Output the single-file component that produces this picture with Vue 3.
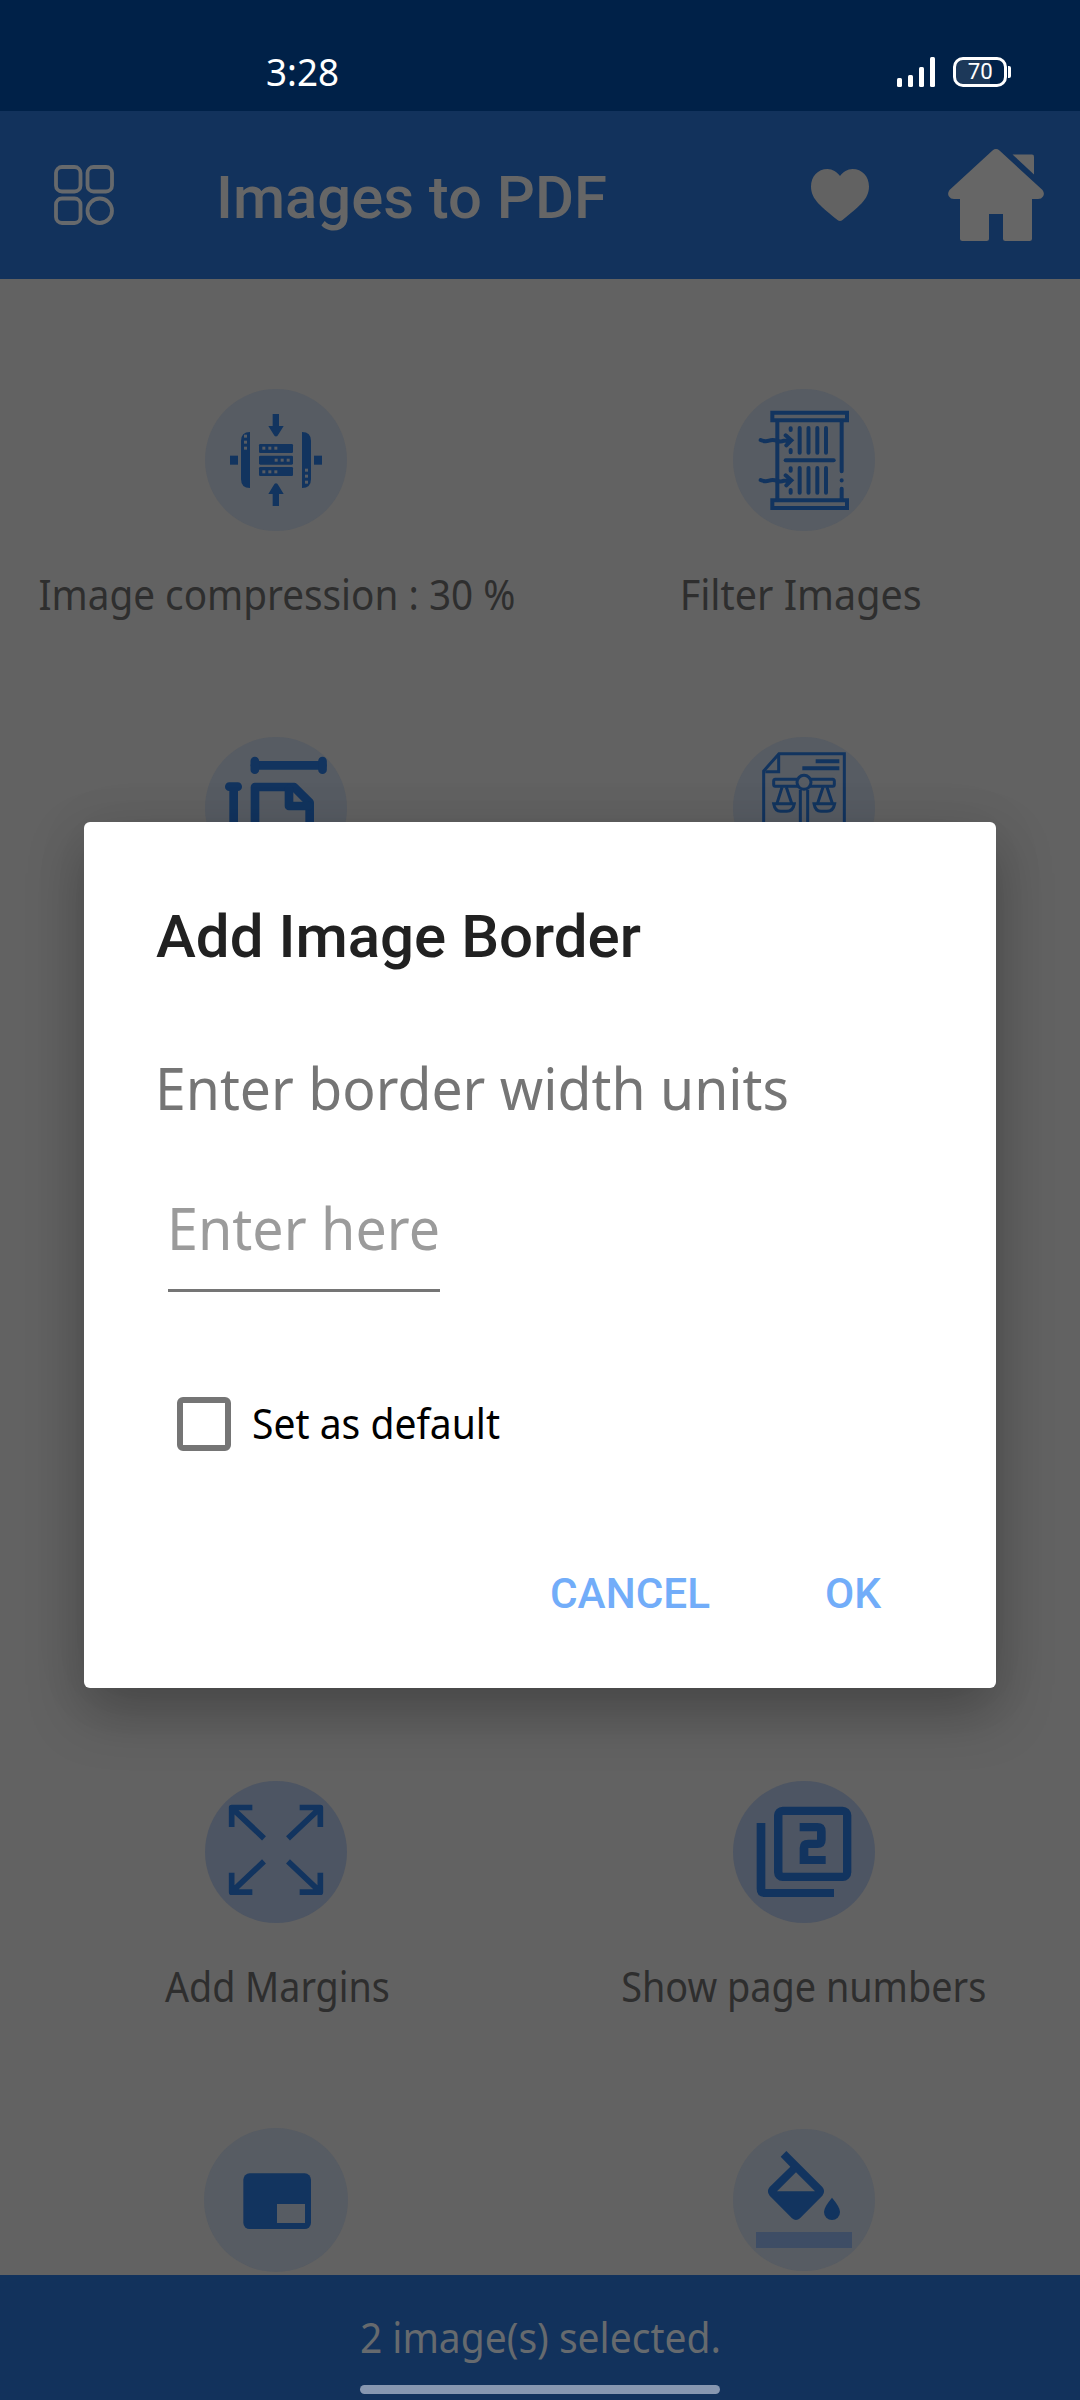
<script setup>
// Squeezes a line of text horizontally so that it occupies the given width.
const fit = (el, { value }) => {
  el.style.transform = 'none'
  el.style.transform = `scaleX(${value / el.getBoundingClientRect().width})`
}
const vFit = { mounted: fit, updated: fit }
</script>

<template>
  <div class="screen">
    <div class="status">
      <span class="clock"><span v-fit="73" class="fit">3:28</span></span>
      <svg class="signal" viewBox="0 0 38 30">
        <rect x="0" y="21" width="5" height="9" rx="1.5" />
        <rect x="11" y="18" width="5" height="12" rx="1.5" />
        <rect x="22" y="10" width="5" height="20" rx="1.5" />
        <rect x="33" y="0" width="5" height="30" rx="1.5" />
      </svg>
      <div class="battery"><span v-fit="25" class="fit mid">70</span></div>
      <i class="nub"></i>
    </div>

    <header class="bar">
      <svg class="menu" viewBox="0 0 60 60">
        <rect x="2" y="2" width="24.500" height="24.500" rx="6" />
        <rect x="33.500" y="2" width="24.500" height="24.500" rx="6" />
        <rect x="2" y="33.500" width="24.500" height="24.500" rx="6" />
        <circle cx="45.750" cy="45.750" r="12.250" />
      </svg>
      <h1><span v-fit="391" class="fit">Images to PDF</span></h1>
      <svg class="heart" viewBox="0 0 58 52">
        <path d="M29 7C26 3 21.500 0 16.500 0 6.800 0 0 7.500 0 17.500 0 31 11 38 26.500 51Q29 53 31.500 51C47 38 58 31 58 17.500 58 7.500 51.200 0 41.500 0 36.500 0 32 3 29 7z" />
      </svg>
      <svg class="home" viewBox="0 0 96 92">
        <path d="M44.500 1.500Q48 -1.300 51.500 1.500L94.500 41Q97 44.500 95 47.500 93.500 50 90 50H84V89.500Q84 92 81.500 92H57.500Q55 92 55 89.500V65H41V89.500Q41 92 38.500 92H14.500Q12 92 12 89.500V50H6Q2.500 50 1 47.500-1 44.500 1.500 41z" />
        <path d="M64.500 5.500H84Q86 5.500 86 7.500V25.500z" />
      </svg>
    </header>

    <main class="grid">
      <section class="cell r1">
        <svg class="tile" viewBox="75 57 426 426">
          <circle cx="288" cy="270" r="213" class="disc" />
          <g class="ink">
            <path d="M278 132H297V168H311L296 192Q288 207 280 192L265 168H278z" />
            <path d="M278 408H297V372H311L296 347Q288 333 280 347L265 372H278z" />
            <path d="M210 186V354Q183 354 183 327V213Q183 186 210 186z" />
            <path d="M366 186V354Q393 354 393 327V213Q393 186 366 186z" />
            <rect x="150" y="257" width="24" height="27" /><rect x="402" y="257" width="24" height="27" />
            <rect x="237" y="222" width="102" height="27" rx="4" />
            <rect x="237" y="257" width="102" height="27" rx="4" />
            <rect x="237" y="291" width="102" height="27" rx="4" />
          </g>
          <g class="hole">
            <rect x="247" y="230" width="9" height="9" /><rect x="265" y="230" width="9" height="9" /><rect x="283" y="230" width="9" height="9" />
            <rect x="284" y="266" width="9" height="9" /><rect x="302" y="266" width="9" height="9" /><rect x="320" y="266" width="9" height="9" />
            <rect x="247" y="301" width="9" height="9" /><rect x="265" y="301" width="9" height="9" /><rect x="283" y="301" width="9" height="9" />
            <rect x="192" y="194" width="9" height="9" /><rect x="192" y="212" width="9" height="9" /><rect x="192" y="230" width="9" height="9" />
            <rect x="375" y="296" width="9" height="9" /><rect x="375" y="314" width="9" height="9" /><rect x="375" y="332" width="9" height="9" />
          </g>
        </svg>
        <p class="nudge-right"><span v-fit="477" class="fit mid">Image compression : 30 %</span></p>
      </section>

      <section class="cell r1">
        <svg class="tile" viewBox="69 57 426 426">
          <circle cx="282" cy="270" r="213" class="disc" />
          <g class="line" stroke-width="12" stroke-linecap="round">
            <path d="M187 128H411V151H187zM187 391H411V414H187z" />
            <path d="M202 155V388M395 155V304M395 331V331.500M395 356V388" />
            <path d="M242 175V180M242 240V247M242 295V302M242 360V368" />
            <path d="M269 174V248M295.500 174V248M322 174V248M348 174V248M269 294V368M295.500 294V368M322 294V368M348 294V368" />
            <path d="M227 271H371" />
            <path d="M152 210Q165 216 177 212T202 213Q213 216 222 212L243 211M227 196L244 211 229 226" />
            <path d="M152 330Q165 336 177 332T202 333Q213 336 222 332L243 331M227 316L244 331 229 346" />
          </g>
        </svg>
        <p class="nudge-left"><span v-fit="242" class="fit mid">Filter Images</span></p>
      </section>

      <section class="cell r2">
        <svg class="tile" viewBox="75 51 426 426">
          <circle cx="288" cy="264" r="213" class="disc" />
          <g class="line" stroke-width="26" stroke-linecap="round" stroke-linejoin="round">
            <path d="M225 136H427" />
            <path d="M224.500 123V149M427.500 123V149" />
            <path d="M148 200H173M161 200V420" />
            <path d="M225 420V201H342L389 248V420" />
            <path d="M327 207V258H386" />
          </g>
        </svg>
      </section>

      <section class="cell r2">
        <svg class="tile" viewBox="69 51 426 426">
          <circle cx="282" cy="264" r="213" class="disc" />
          <g class="line" stroke-width="9">
            <path d="M161 420V153L207 101H403V420" />
            <path d="M166 155H206V104" />
            <path d="M317 123.500H388M277 145H388" stroke-width="12" />
            <path d="M264 178H196Q191 178 191 184V193Q191 199 196 199H264M300 178H368Q373 178 373 184V193Q373 199 368 199H300" />
            <circle cx="282" cy="187" r="21" />
            <path d="M271 209V420M293 209V420" />
            <path d="M216 202L201 250M229 202L245 250M339 202L323 250M351 202L367 250" />
            <path d="M191 251H253Q249 274 230 274H212Q195 274 191 251zM312 251H374Q370 274 351 274H333Q316 274 312 251z" />
          </g>
        </svg>
      </section>

      <section class="cell r5">
        <svg class="tile" viewBox="75 63 426 426">
          <circle cx="288" cy="276" r="213" class="disc deep" />
          <g class="line" stroke-width="17">
            <path d="M217 142.500H155V201M160 148L252 235" stroke-linejoin="round" />
            <path d="M359 142.500H421V201M416 148L324 235" stroke-linejoin="round" />
            <path d="M217 396.500H155V338M160 391L252 304" stroke-linejoin="round" />
            <path d="M359 396.500H421V338M416 391L324 304" stroke-linejoin="round" />
          </g>
        </svg>
        <p class="nudge-right"><span v-fit="225" class="fit mid">Add Margins</span></p>
      </section>

      <section class="cell r5">
        <svg class="tile" viewBox="69 63 426 426">
          <circle cx="282" cy="276" r="213" class="disc deep" />
          <rect x="205" y="153" width="206" height="197" rx="13" class="line" stroke-width="26" />
          <rect x="218" y="165" width="181" height="173" class="hole deep" />
          <path class="ink" d="M140 189H166V387H372V411H165Q140 411 140 386z" />
          <path class="ink" d="M269 189H322Q347 189 347 214V239Q347 264 322 264H295V288H347V312H269V264Q269 239 295 239H321V214H269z" />
        </svg>
        <p><span v-fit="365" class="fit mid">Show page numbers</span></p>
      </section>

      <section class="cell r6">
        <svg class="tile" viewBox="75 57 426 426">
          <circle cx="288" cy="270" r="216" class="disc" />
          <rect x="190" y="190" width="203" height="167" rx="19" class="ink" />
          <rect x="291" y="282" width="84" height="57" class="hole" />
        </svg>
      </section>

      <section class="cell r6">
        <svg class="tile" viewBox="69 57 426 426">
          <circle cx="282" cy="270" r="213" class="disc" />
          <path class="ink" fill-rule="evenodd" d="M229 123L337 231Q348 244 337 257L270 325Q258 335 246 325L179 257Q168 244 179 231L241 170 212 140zM258 187L201 244H315z" />
          <path class="ink" d="M366 263Q390 291 390 306A24 24 0 0 1 342 306Q342 291 366 263z" />
          <rect x="138" y="366" width="288" height="48" fill="#3e4d65" />
        </svg>
      </section>
    </main>

    <footer class="foot">
      <p><span v-fit="361" class="fit mid">2 image(s) selected.</span></p>
      <i class="pill"></i>
    </footer>

    <div class="dialog">
      <h2><span v-fit="485" class="fit">Add Image Border</span></h2>
      <p class="prompt"><span v-fit="634" class="fit">Enter border width units</span></p>
      <div class="field"><span v-fit="273" class="fit">Enter here</span></div>
      <div class="check">
        <i class="box"></i>
        <span v-fit="248" class="fit">Set as default</span>
      </div>
      <div class="actions">
        <span class="cancel"><span v-fit="160" class="fit">CANCEL</span></span>
        <span class="ok"><span v-fit="56" class="fit">OK</span></span>
      </div>
    </div>
  </div>
</template>

<style>
body { margin: 0; background: #626262; }
</style>

<style scoped>
.screen {
  position: relative;
  width: 1080px;
  height: 2400px;
  display: flex;
  flex-direction: column;
  overflow: hidden;
  background: #626262;
  font-family: "Noto Sans", "Open Sans", sans-serif;
}
h1, h2, p { margin: 0; font-weight: 400; }
svg { display: block; flex: none; overflow: visible; }
.fit { display: inline-block; white-space: nowrap; transform-origin: 0 50%; }
.fit.mid { transform-origin: 50% 50%; }

.status {
  box-sizing: border-box;
  height: 111px;
  flex: none;
  display: flex;
  align-items: flex-start;
  padding: 57px 0 0 266px;
  background: #002148;
  color: #fff;
}
.clock { width: 631px; margin-top: -1px; font-size: 39px; line-height: 30px; }
.signal { width: 38px; height: 30px; fill: #fff; }
.battery {
  box-sizing: border-box;
  width: 54px;
  height: 30px;
  margin-left: 18px;
  border: 3px solid #fff;
  border-radius: 10px;
  background: linear-gradient(90deg, #1c3859 34px, transparent 34px);
  font: 400 22px/24px Roboto, sans-serif;
  text-align: center;
}
.nub { width: 3px; height: 12px; margin: 9px 0 0 1px; border-radius: 0 2px 2px 0; background: #fff; }

.bar {
  box-sizing: border-box;
  height: 168px;
  flex: none;
  display: flex;
  align-items: flex-start;
  padding-left: 54px;
  background: #12325c;
}
.menu { width: 60px; height: 60px; margin-top: 54px; fill: none; stroke: #66696c; stroke-width: 3.800; }
.bar h1 {
  width: 595px;
  margin: 47px 0 0 102px;
  font: 500 60px/80px Roboto, sans-serif;
  color: #666;
}
.heart { width: 58px; height: 52px; margin-top: 58px; fill: #626262; }
.home { width: 96px; height: 92px; margin: 38px 0 0 79px; fill: #666; }

.grid {
  height: 1996px;
  flex: none;
  overflow: hidden;
  display: grid;
  grid-template-columns: 528px 528px;
  grid-template-rows: repeat(6, 348px);
  padding: 0 12px;
  box-sizing: border-box;
}
.cell { display: flex; flex-direction: column; align-items: center; padding-top: 110px; }
.r1 { grid-row: 1; }
.r2 { grid-row: 2; }
.r5 { grid-row: 5; }
.r6 { grid-row: 6; }
.tile { width: 142px; height: 142px; }
.disc, .hole { fill: #575c63; }
.disc.deep, .hole.deep { fill: #4d5563; }
.ink { fill: #12345f; }
.line { fill: none; stroke: #12345f; }
.cell p { margin-top: 33px; font-size: 42px; line-height: 60px; color: #2e2e2e; }
.cell .nudge-right { padding-left: 2px; }
.cell .nudge-left { padding-right: 6px; }

.foot {
  height: 125px;
  flex: none;
  display: flex;
  flex-direction: column;
  align-items: center;
  background: #12325c;
}
.foot p { margin-top: 32px; font-size: 42px; line-height: 60px; color: #666a6e; }
.pill { width: 360px; height: 9px; margin-top: 18px; border-radius: 5px; background: #8797b0; }

.dialog {
  position: absolute;
  left: 84px;
  top: 822px;
  width: 912px;
  height: 866px;
  box-sizing: border-box;
  padding: 75px 72px 0;
  border-radius: 6px;
  background: #fff;
  box-shadow: 0 24px 56px rgba(0, 0, 0, 0.26), 0 4px 60px rgba(0, 0, 0, 0.06);
}
.dialog h2 { font: 500 60px/80px Roboto, sans-serif; color: #212121; }
.prompt { margin-top: 70px; margin-left: -1px; font-size: 59px; line-height: 80px; color: #757575; }
.field {
  width: 272px;
  height: 102px;
  margin: 60px 0 0 12px;
  border-bottom: 3px solid #757575;
  font-size: 59px;
  line-height: 80px;
  color: #9b9b9b;
}
.field .fit { margin-left: -1px; }
.check {
  display: flex;
  margin: 105px 0 0 21px;
  font-size: 41px;
  line-height: 53px;
  color: #000;
}
.box { box-sizing: border-box; width: 54px; height: 54px; margin-right: 21px; border: 6px solid #757575; border-radius: 6px; }
.actions {
  display: flex;
  margin: 116px 0 0 394px;
  font: 500 42px/54px Roboto, sans-serif;
  color: #72adf9;
}
.cancel { width: 275px; }
</style>
